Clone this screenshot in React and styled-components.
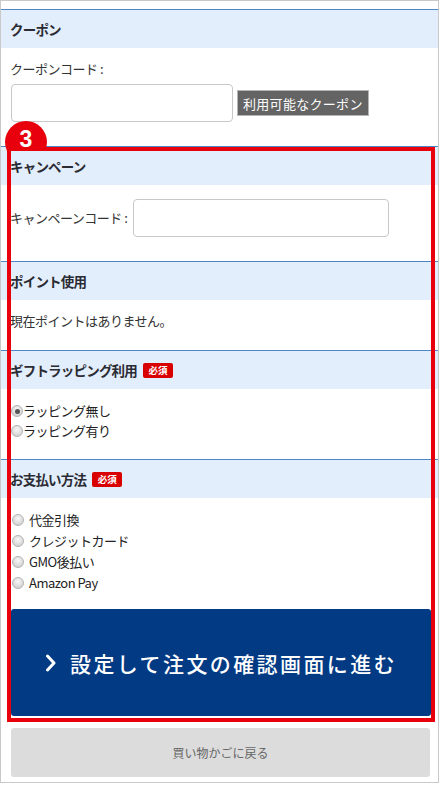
import styled, { createGlobalStyle } from "styled-components";

const Global = createGlobalStyle`
  body {
    margin: 0;
    background: #fff;
    font-family: "Noto Sans CJK JP", "Noto Sans", sans-serif;
    color: #333;
  }
`;

const Frame = styled.div`
  position: relative;
  box-sizing: border-box;
  width: 439px;
  height: 783px;
  border: 1px solid #c9c9c9;
  padding-top: 8px;
  background: #fff;
`;

const Section = styled.section`
  border-top: 1px solid #4f86c6;
`;

const SectionHead = styled.h2`
  margin: 0;
  height: 38px;
  display: flex;
  align-items: center;
  padding-left: 9px;
  background: #e2eefb;
  font-size: 13.5px;
  font-weight: 700;
  color: #2b2b33;
  letter-spacing: -0.8px;
`;

const Required = styled.span`
  display: inline-flex;
  align-items: center;
  justify-content: center;
  width: 30px;
  height: 15px;
  margin-left: 6px;
  border-radius: 2px;
  background: #d90000;
  color: #fff;
  font-size: 9.5px;
  font-weight: 700;
  letter-spacing: 0;
`;

const SectionBody = styled.div`
  padding: ${(p) => p.$pad || "12px 7px 24px 9px"};
  font-size: 13px;
  line-height: 18px;
  letter-spacing: -0.5px;
`;

const Label = styled.div`
  margin-bottom: 6px;
`;

const FieldRow = styled.div`
  display: flex;
  align-items: center;
  gap: ${(p) => p.$gap || "4px"};
`;

const TextInput = styled.input`
  box-sizing: border-box;
  width: ${(p) => p.$w}px;
  height: 38px;
  border: 1px solid #c8c8c8;
  border-radius: 4px;
  margin: 0;
  margin-left: 1px;
  background: #fff;
`;

const SmallButton = styled.button`
  height: 26px;
  padding: 0 5px;
  border: 1px solid #b5b5b5;
  background: #646464;
  color: #fff;
  font-family: inherit;
  font-size: 13px;
  letter-spacing: 0.3px;
`;

const RadioList = styled.div`
  display: flex;
  flex-direction: column;
`;

const RadioRow = styled.label`
  display: flex;
  align-items: center;
  height: ${(p) => p.$h || 20}px;
  gap: ${(p) => p.$gap || 0}px;
  font-size: 13px;
  color: #222;
`;

const Radio = styled.input.attrs({ type: "radio" })`
  appearance: none;
  box-sizing: border-box;
  width: 12px;
  height: 12px;
  margin: 0 0 0 ${(p) => p.$offset || 1}px;
  border-radius: 50%;
  border: 1px solid #b3b3b3;
  background: radial-gradient(circle at 50% 35%, #f7f7f7 0%, #d6d6d6 70%, #c4c4c4 100%);
  position: relative;
  &:checked::after {
    content: "";
    position: absolute;
    left: 2.5px;
    top: 2.5px;
    width: 5px;
    height: 5px;
    border-radius: 50%;
    background: #555;
  }
`;

const Actions = styled.div`
  display: flex;
  flex-direction: column;
  gap: 12px;
  padding: 16px 7px 0 10px;
`;

const PrimaryButton = styled.button`
  height: 107px;
  display: flex;
  align-items: center;
  justify-content: center;
  gap: 13px;
  border: none;
  border-radius: 3px;
  background: #023a84;
  color: #fff;
  font-family: inherit;
  font-size: 21px;
  font-weight: 500;
  letter-spacing: 2.4px;
`;

const BackButton = styled.button`
  height: 49px;
  margin-right: 1px;
  border: none;
  border-radius: 3px;
  background: #dcdcdc;
  color: #666;
  font-family: inherit;
  font-size: 12px;
`;

const Highlight = styled.div`
  position: absolute;
  left: 6px;
  top: 146px;
  width: 428px;
  height: 575px;
  box-sizing: border-box;
  border: 4px solid #e8000d;
  pointer-events: none;
`;

const StepClip = styled.div`
  position: absolute;
  left: 4px;
  top: 120px;
  width: 42px;
  height: 30px;
  overflow: hidden;
`;

const StepBadge = styled.div`
  box-sizing: border-box;
  width: 42px;
  height: 42px;
  padding-top: 7px;
  border-radius: 50%;
  background: #e8000d;
  color: #fff;
  text-align: center;
  font-family: "Liberation Sans", Arial, sans-serif;
  font-size: 23px;
  line-height: 1;
  font-weight: 700;
`;

function Chevron() {
  return (
    <svg width="12" height="18" viewBox="0 0 12 18">
      <polyline
        points="2.5,2 9,9 2.5,16"
        fill="none"
        stroke="#fff"
        strokeWidth="3"
        strokeLinecap="round"
        strokeLinejoin="round"
      />
    </svg>
  );
}

const payments = ["代金引換", "クレジットカード", "GMO後払い", "Amazon Pay"];

export default function App() {
  return (
    <>
      <Global />
      <Frame>
        <Section>
          <SectionHead>クーポン</SectionHead>
          <SectionBody>
            <Label>クーポンコード :</Label>
            <FieldRow>
              <TextInput $w={222} />
              <SmallButton>利用可能なクーポン</SmallButton>
            </FieldRow>
          </SectionBody>
        </Section>

        <Section>
          <SectionHead>キャンペーン</SectionHead>
          <SectionBody $pad="14px 7px 24px 9px">
            <FieldRow $gap="5px">
              <span>キャンペーンコード :</span>
              <TextInput $w={256} />
            </FieldRow>
          </SectionBody>
        </Section>

        <Section>
          <SectionHead>ポイント使用</SectionHead>
          <SectionBody $pad="12px 7px 20px 9px">現在ポイントはありません。</SectionBody>
        </Section>

        <Section>
          <SectionHead>
            ギフトラッピング利用<Required>必須</Required>
          </SectionHead>
          <SectionBody $pad="12px 7px 18px 9px">
            <RadioList>
              <RadioRow>
                <Radio name="wrap" defaultChecked />
                ラッピング無し
              </RadioRow>
              <RadioRow>
                <Radio name="wrap" />
                ラッピング有り
              </RadioRow>
            </RadioList>
          </SectionBody>
        </Section>

        <Section>
          <SectionHead>
            お支払い方法<Required>必須</Required>
          </SectionHead>
          <SectionBody $pad="11px 7px 0 9px">
            <RadioList>
              {payments.map((p) => (
                <RadioRow key={p} $h={21} $gap={5}>
                  <Radio name="pay" $offset={2} />
                  {p}
                </RadioRow>
              ))}
            </RadioList>
          </SectionBody>
        </Section>

        <Actions>
          <PrimaryButton>
            <Chevron />
            設定して注文の確認画面に進む
          </PrimaryButton>
          <BackButton>買い物かごに戻る</BackButton>
        </Actions>

        <Highlight />
        <StepClip>
          <StepBadge>3</StepBadge>
        </StepClip>
      </Frame>
    </>
  );
}
